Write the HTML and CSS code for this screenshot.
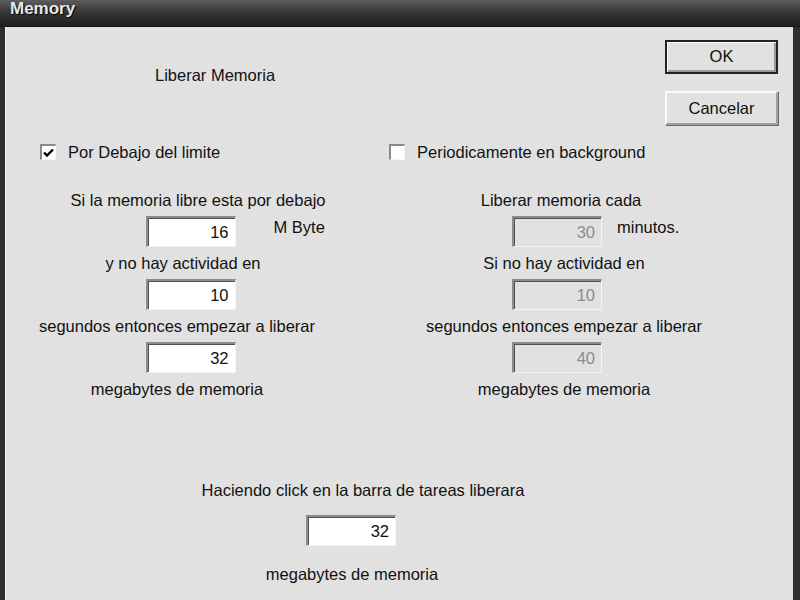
FILE: index.html
```html
<!DOCTYPE HTML>
<html>

<head>
    <meta charset='utf-8'>
    <link rel="stylesheet" href="styles.css">
</head>

<body>
    <div class="window">
        <!--標題-->
        <div class="titleBar">Memory</div>

        <div class="client">
            <div class="topRow">
                <div class="heading">Liberar Memoria</div>
                <div class="btnColumn">
                    <div class="btn default">OK</div>
                    <div class="btn">Cancelar</div>
                </div>
            </div>

            <div class="twoCols checkRow">
                <label class="check leftCheck"><span class="box"><svg width="11" height="10" viewBox="0 0 11 10"><path d="M1 4.5 L4 7.5 L10 1.5" fill="none" stroke="#000" stroke-width="2.4"/></svg></span>Por Debajo del limite</label>
                <label class="check rightCheck"><span class="box"></span>Periodicamente en background</label>
            </div>

            <div class="twoCols">
                <!--左邊-->
                <div class="col">
                    <div class="line shiftR">Si la memoria libre esta por debajo</div>
                    <div class="fieldRow leftField"><div class="field">16</div><span class="unit far">M Byte</span></div>
                    <div class="line shiftL">y no hay actividad en</div>
                    <div class="fieldRow leftField"><div class="field">10</div></div>
                    <div class="line shiftL2">segundos entonces empezar a liberar</div>
                    <div class="fieldRow leftField"><div class="field">32</div></div>
                    <div class="line shiftL2">megabytes de memoria</div>
                </div>

                <!--右邊-->
                <div class="col">
                    <div class="line shiftL">Liberar memoria cada</div>
                    <div class="fieldRow rightField"><div class="field off">30</div><span class="unit">minutos.</span></div>
                    <div class="line">Si no hay actividad en</div>
                    <div class="fieldRow rightField"><div class="field off">10</div></div>
                    <div class="line">segundos entonces empezar a liberar</div>
                    <div class="fieldRow rightField"><div class="field off">40</div></div>
                    <div class="line">megabytes de memoria</div>
                </div>
            </div>

            <div class="bottom">
                <div class="line">Haciendo click en la barra de tareas liberara</div>
                <div class="field bottomField">32</div>
                <div class="line bottomLast">megabytes de memoria</div>
            </div>
        </div>
    </div>
</body>

</html>
```

FILE: styles.css
```css
body {
    margin: 0px;
    padding: 0px;
    width: 800px;
    height: 600px;
    overflow: hidden;
    font-family: "Liberation Sans", Arial, sans-serif;
    font-size: 16.5px;
    color: #111;
}

.window {
    width: 800px;
    height: 600px;
    background-color: #2e2e2e;
    display: flex;
    flex-direction: column;
}

.titleBar {
    height: 27px;
    flex: none;
    background: linear-gradient(#5e5e5e, #3a3a3a 40%, #1f1f1f);
    color: #e8e8e8;
    font-weight: bold;
    font-size: 17px;
    line-height: 18px;
    padding-left: 10px;
    text-shadow: 1px 1px 1px #000;
    box-sizing: border-box;
    border-bottom: 1px solid #151515;
}

.client {
    flex: 1 1 auto;
    margin-left: 5px;
    margin-right: 7px;
    background-color: #e1e1e1;
    border-left: 1px solid #f4f4f4;
    padding-top: 13px;
    box-sizing: border-box;
}

.topRow {
    display: flex;
    justify-content: space-between;
    padding-left: 149px;
    padding-right: 15px;
}

.heading {
    margin-top: 25px;
    height: 20px;
    line-height: 20px;
}

.btnColumn {
    display: flex;
    flex-direction: column;
    gap: 17px;
}

.btn {
    width: 113px;
    height: 34px;
    box-sizing: border-box;
    text-align: center;
    line-height: 30px;
    background-color: #e1e1e1;
    border-top: 2px solid #fbfbfb;
    border-left: 2px solid #fbfbfb;
    border-right: 2px solid #a0a0a0;
    border-bottom: 2px solid #a0a0a0;
    box-shadow: 1px 1px 0px #6a6a6a;
}

.btn.default {
    border: 2px solid #222;
    box-shadow: inset 1px 1px 0px #fff, inset -2px -2px 0px #9a9a9a;
    line-height: 28px;
}

.twoCols {
    display: grid;
    grid-template-columns: 360px 396px;
}

.checkRow {
    margin-top: 17px;
    height: 20px;
    margin-bottom: 22px;
}

.check {
    display: flex;
    align-items: center;
    gap: 12px;
    line-height: 20px;
}

.leftCheck {
    padding-left: 34px;
}

.rightCheck {
    padding-left: 23px;
}

.box {
    width: 16px;
    height: 16px;
    box-sizing: border-box;
    background-color: #fff;
    border-top: 2px solid #8a8a8a;
    border-left: 2px solid #8a8a8a;
    border-right: 1px solid #f6f6f6;
    border-bottom: 1px solid #f6f6f6;
    display: flex;
    align-items: center;
    justify-content: center;
}

.col {
    display: flex;
    flex-direction: column;
    align-items: center;
}

.line {
    height: 32px;
    line-height: 32px;
    white-space: nowrap;
}

.shiftR {
    margin-left: 24px;
}

.shiftL {
    margin-left: -6px;
}

.shiftL2 {
    margin-left: -18px;
}

.fieldRow {
    display: grid;
    grid-template-columns: 1fr 90px 1fr;
    width: 100%;
}

.leftField {
    margin-left: 9px;
}

.rightField {
    margin-left: -14px;
}

.fieldRow .field {
    grid-column: 2;
}

.field {
    width: 90px;
    height: 31px;
    box-sizing: border-box;
    background-color: #fff;
    border-top: 2px solid #8c8c8c;
    border-left: 2px solid #8c8c8c;
    border-right: 1px solid #f4f4f4;
    border-bottom: 1px solid #f4f4f4;
    box-shadow: inset 1px 1px 0px #505050;
    text-align: right;
    padding-right: 6px;
    line-height: 28px;
    color: #111;
}

.field.off {
    background-color: #e1e1e1;
    color: #8c8c8c;
}

.unit {
    padding-left: 15px;
    line-height: 22px;
    white-space: nowrap;
}

.unit.far {
    padding-left: 38px;
}

.bottom {
    width: 690px;
    margin-top: 69px;
    display: flex;
    flex-direction: column;
    align-items: center;
}

.bottom .line:first-child {
    margin-left: 24px;
}

.bottomField {
    margin-top: 9px;
}

.bottomLast {
    margin-top: 12px;
    margin-left: 2px;
}
```
